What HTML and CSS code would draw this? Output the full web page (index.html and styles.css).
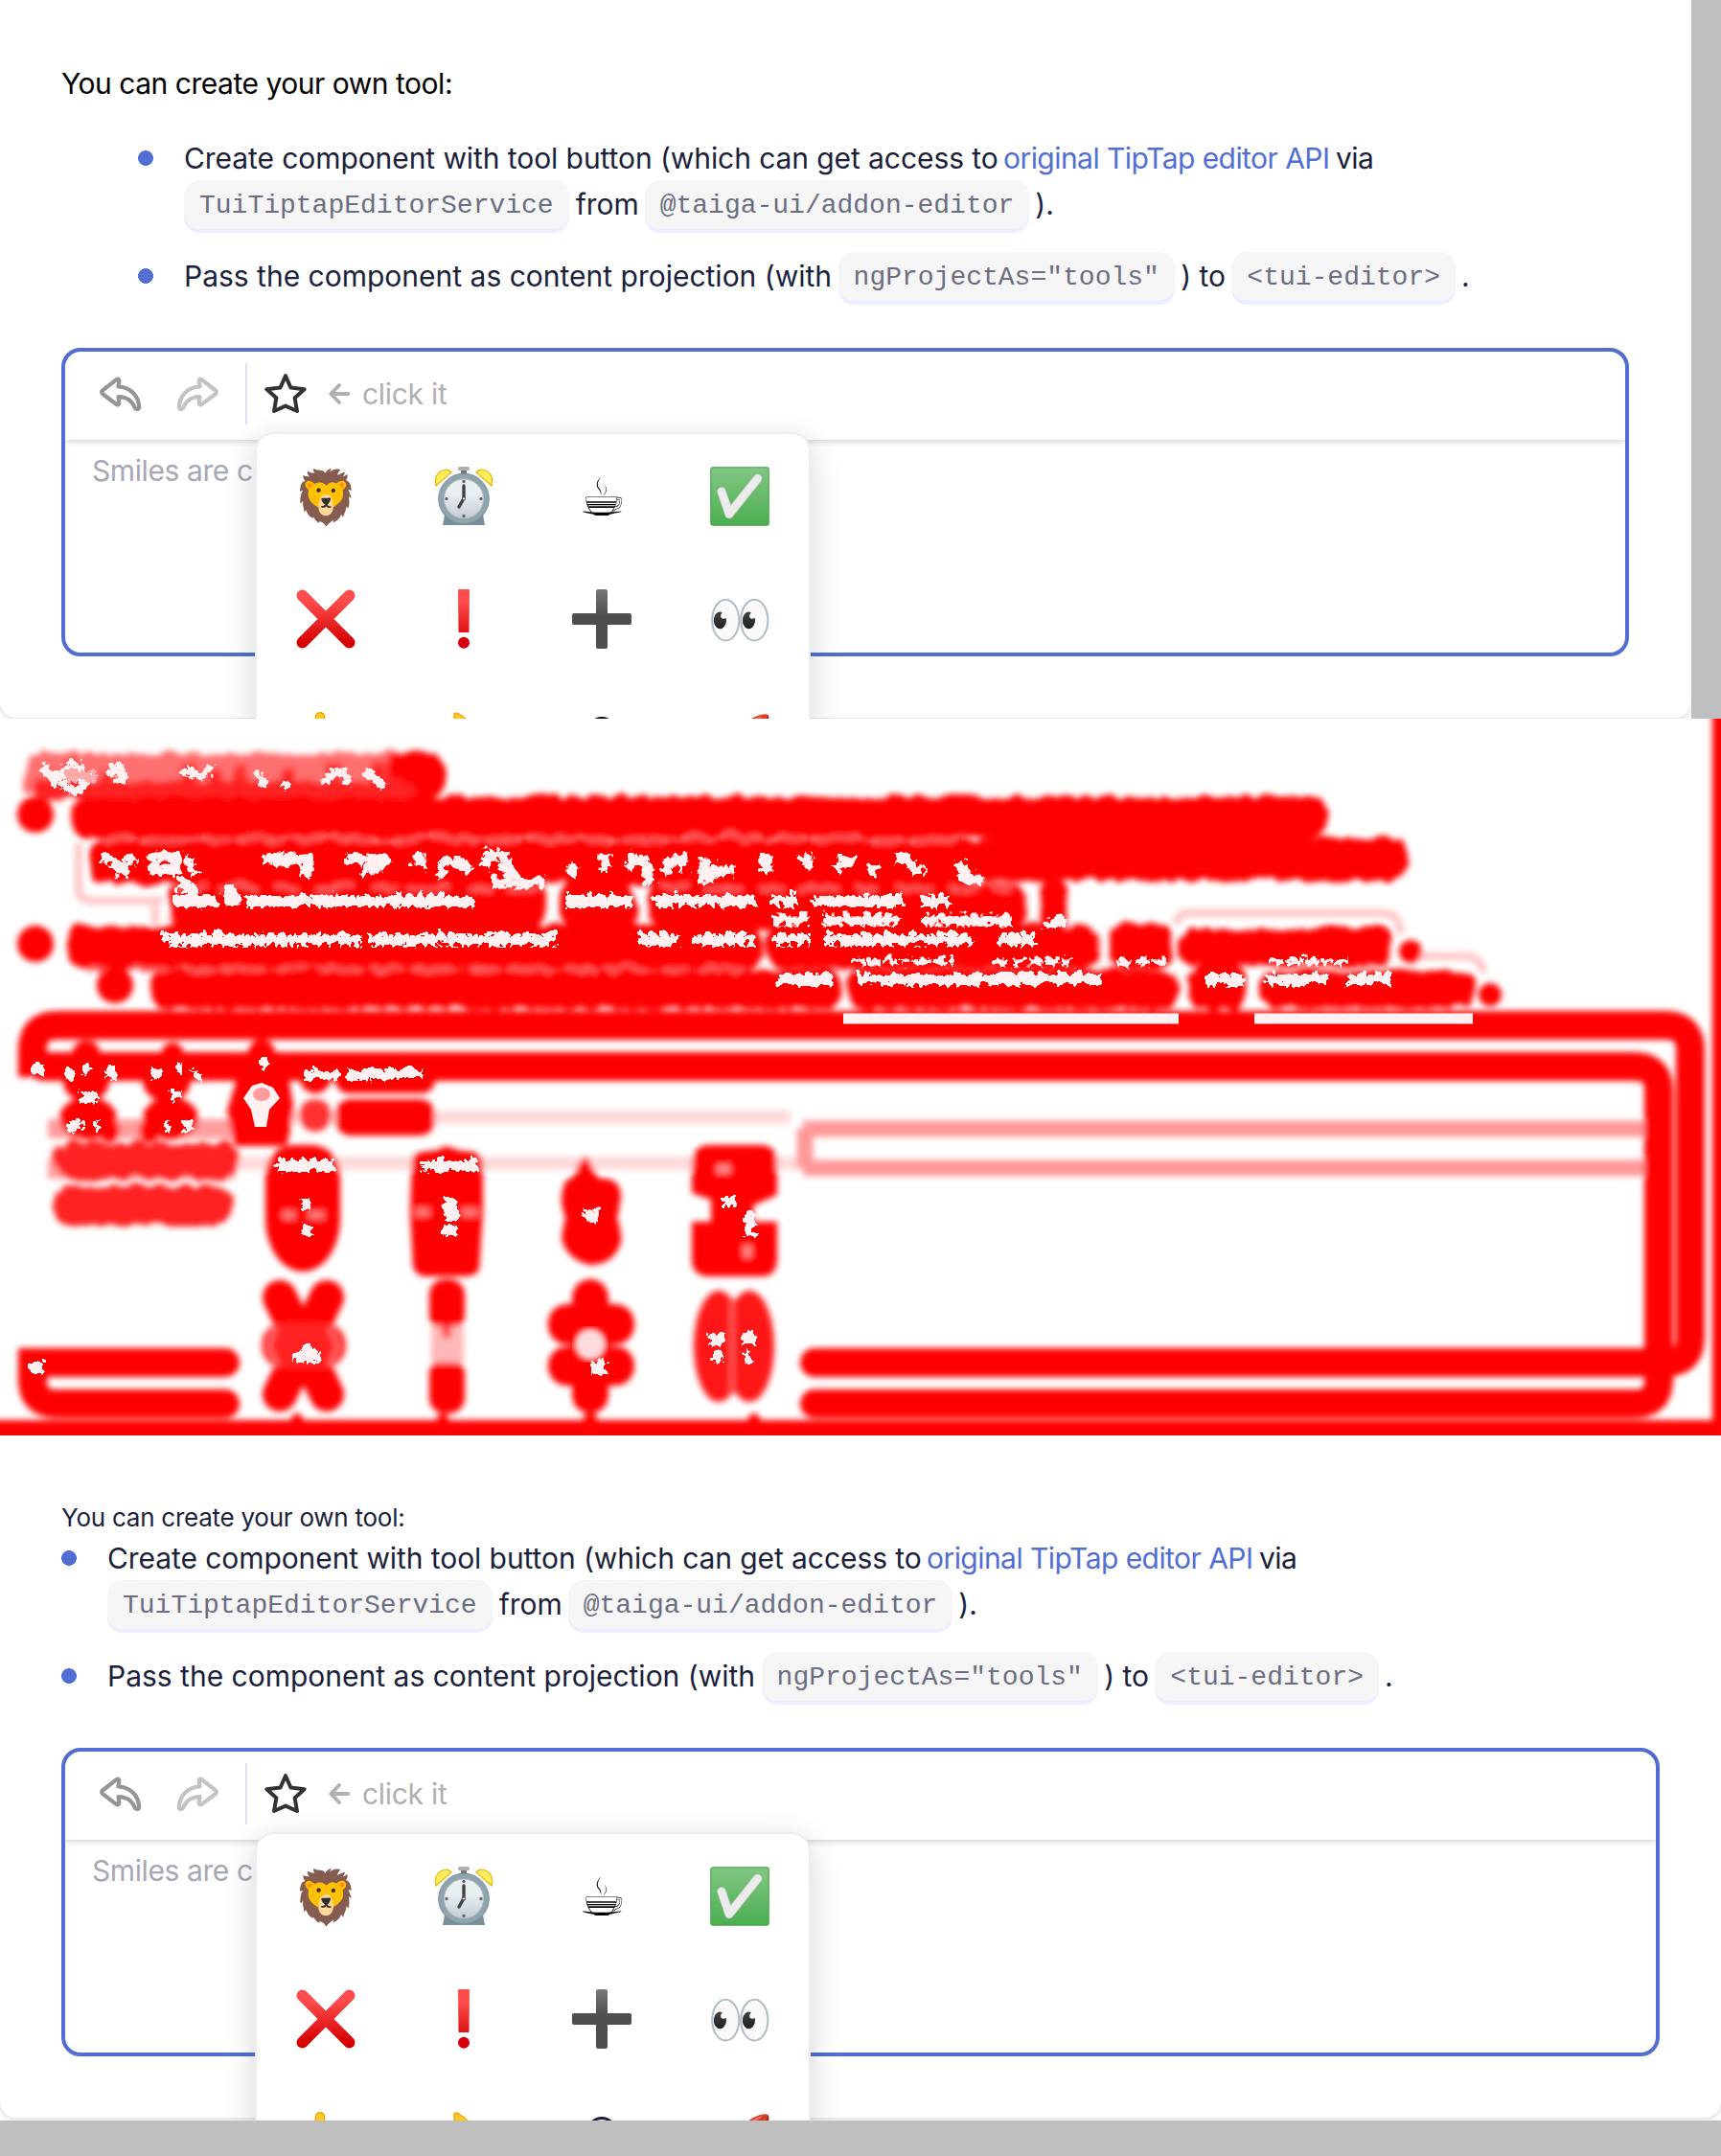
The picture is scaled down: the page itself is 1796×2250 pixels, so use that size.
FILE: index.html
```
<!DOCTYPE html>
<html lang="en">
<head>
<meta charset="utf-8">
<title>Editor custom tool: before, difference, after</title>
<link rel="stylesheet" href="styles.css">
</head>
<body>
<svg class="defs" aria-hidden="true">
  <linearGradient id="green" x1="0" y1="0" x2="0" y2="1"><stop offset="0" stop-color="#81c784"/><stop offset="1" stop-color="#4caf50"/></linearGradient>
  <linearGradient id="crimson" gradientUnits="userSpaceOnUse" x1="0" y1="0" x2="0" y2="62"><stop offset=".2" stop-color="#ff4d4d"/><stop offset=".9" stop-color="#d50000"/></linearGradient>
  <linearGradient id="coal" x1="0" y1="0" x2="0" y2="1"><stop offset="0" stop-color="#787878"/><stop offset=".45" stop-color="#4e4e4e"/></linearGradient>
  <linearGradient id="face" x1="0" y1="0" x2="0" y2="1"><stop offset=".4" stop-color="#e9eef1"/><stop offset="1" stop-color="#c3cbd1"/></linearGradient>
  <symbol id="reply" viewBox="0 0 44 36"><path d="M3 14.5 17.5 3.2Q20.5 1.5 20.3 5L19.5 10.5C32 11 41 20 41.2 32.5Q40 35.5 37 33C33 24 28 21.5 19.5 21L20.3 27.5Q20 30.5 17 28.7L3 18Q1.5 16.2 3 14.5Z" fill="none" stroke="currentColor" stroke-width="4.2" stroke-linejoin="round"/></symbol>
  <symbol id="star" viewBox="0 0 44 44"><path d="M22 3.2 27.4 15.5 41.6 17.2 31.6 26.2 34 40 22 34.6 10 40 12.4 26.2 2.4 17.2 16.6 15.5Z" fill="none" stroke="currentColor" stroke-width="4" stroke-linejoin="round"/></symbol>
  <symbol id="arrow" viewBox="0 0 22 22"><path d="M20.3 11H3M11 2 2.3 11 11 20" fill="none" stroke="currentColor" stroke-width="3.8" stroke-linecap="round" stroke-linejoin="round"/></symbol>
  <symbol id="clock" viewBox="0 0 62 62">
    <path d="M12 45h38l3 16H9z" fill="#78909c"/>
    <path d="M28 3h6v6h-6z" fill="#757575"/><rect x="25" y="0" width="12" height="4" rx="1.5" fill="#b0b0b0"/>
    <path d="M2 20Q-1 7 10 3.500Q15 2 18 6Z" fill="#ffee58" stroke="#dfbd20" stroke-width="1.3"/>
    <path d="M60 20Q63 7 52 3.500Q47 2 44 6Z" fill="#ffee58" stroke="#dfbd20" stroke-width="1.3"/>
    <circle cx="31" cy="33.5" r="26.3" fill="#90a4ae" stroke="#78909c"/>
    <circle cx="31" cy="33.5" r="20.5" fill="url(#face)" stroke="#b4c0c6"/>
    <g fill="#666"><circle cx="31" cy="15.5" r="1.7"/><circle cx="31" cy="51.5" r="1.7"/><circle cx="13" cy="33.5" r="1.7"/><circle cx="49" cy="33.5" r="1.7"/></g>
    <path d="M31 33V20M31 33 26 42" stroke="#424242" stroke-width="3.4" stroke-linecap="round"/><circle cx="31" cy="33.5" r="1.6" fill="#fff" stroke="#424242"/>
  </symbol>
  <symbol id="check" viewBox="0 0 62 62"><rect x=".7" y=".7" width="60.600" height="60.600" rx="2.500" fill="url(#green)" stroke="#43a047" stroke-opacity=".7" stroke-width="1.4"/><path d="M12 26 20 49.500 49.500 12.500" fill="none" stroke="#c9c9c9" stroke-width="9.500" stroke-linecap="round" stroke-linejoin="round"/><path d="M12 26 20 49.500 49.500 12.500" fill="none" stroke="#ececec" stroke-width="8" stroke-linecap="round" stroke-linejoin="round"/></symbol>
  <symbol id="cross" viewBox="0 0 62 62"><path d="M6.500 6.500 55.500 55.500M55.500 6.500 6.500 55.500" stroke="url(#crimson)" stroke-width="12" stroke-linecap="round"/></symbol>
  <symbol id="bang" viewBox="0 0 62 62"><path d="M26 0H36Q37 0 37 1.500L36.500 44Q36.500 45 35.500 45H26.500Q25.500 45 25.500 44L25 1.500Q25 0 26 0Z" fill="url(#crimson)"/><circle cx="31" cy="55.700" r="6" fill="#d5000c"/></symbol>
  <symbol id="plus" viewBox="0 0 62 62"><path d="M27 0H35Q37 0 37 2V25H60Q62 25 62 27V35Q62 37 60 37H37V60Q37 62 35 62H27Q25 62 25 60V37H2Q0 37 0 35V27Q0 25 2 25H25V2Q25 0 27 0Z" fill="url(#coal)"/></symbol>
  <symbol id="thumb" viewBox="0 0 62 62"><path d="M17 32 20.500 5Q21 .7 25 .7T29.500 5V27H52V58H14Z" fill="#ffca28" stroke="#f0a400" stroke-width="1.400"/></symbol>
  <symbol id="hand" viewBox="0 0 62 62"><path d="M22 30 21 2Q22 .5 25 1.500 36 8 42 18L58 40 40 60H20Z" fill="#ffca28" stroke="#f0a400" stroke-width="1.400"/></symbol>
  <symbol id="ring" viewBox="0 0 62 62"><circle cx="31" cy="21" r="14.500" fill="none" stroke="currentColor" stroke-width="3"/></symbol>
</svg>

<section class="panel before">
  <div class="card">
    <p class="title">You can create your own tool:</p>
    <ul class="steps">
      <li>
        <div class="line"><span class="lead">Create component with tool button (which can get access to</span><a class="link">original TipTap editor API</a><span class="via">via</span></div>
        <div class="line"><code>TuiTiptapEditorService</code><span class="from">from</span><code>@taiga-ui/addon-editor</code><span class="end">).</span></div>
      </li>
      <li>
        <div class="line"><span class="pass">Pass the component as content projection (with</span><code>ngProjectAs="tools"</code><span class="to">) to</span><code>&lt;tui-editor&gt;</code><span class="end">.</span></div>
      </li>
    </ul>
    <div class="editor">
      <div class="toolbar">
        <svg class="undo"><use href="#reply"/></svg><svg class="redo"><use href="#reply"/></svg><i class="divider"></i><svg class="star"><use href="#star"/></svg><svg class="arrow"><use href="#arrow"/></svg><span class="hint">click it</span>
      </div>
      <p class="placeholder">Smiles are c</p>
      <div class="menu">
        <b>🦁</b><b><svg><use href="#clock"/></svg></b><b>☕︎</b><b><svg><use href="#check"/></svg></b>
        <b><svg><use href="#cross"/></svg></b><b><svg><use href="#bang"/></svg></b><b><svg><use href="#plus"/></svg></b><b>👀</b>
        <b><svg><use href="#thumb"/></svg></b><b><svg><use href="#hand"/></svg></b><b><svg><use href="#ring"/></svg></b><b>🚀</b>
      </div>
    </div>
  </div>
</section>

<section class="panel difference">
<svg class="heat" viewBox="0 750 1796 748">
  <defs>
    <filter id="soft" x="-5%" y="-5%" width="110%" height="110%"><feGaussianBlur stdDeviation="3"/></filter>
    <filter id="bumpy" x="-5%" y="-5%" width="110%" height="110%"><feTurbulence baseFrequency=".045 .02" numOctaves="2" seed="4"/><feDisplacementMap in="SourceGraphic" scale="12" xChannelSelector="R" yChannelSelector="G"/></filter>
    <filter id="ragged" x="-5%" y="-5%" width="110%" height="110%"><feTurbulence baseFrequency=".09" numOctaves="2" seed="7"/><feDisplacementMap in="SourceGraphic" scale="13" xChannelSelector="R" yChannelSelector="G"/></filter>
  </defs>
  <g filter="url(#soft)" fill="red">
    <!-- code chips and toolbar shadows -->
    <g fill="none" stroke="#ffc4c4" stroke-width="8">
      <path d="M82 880V930Q84 940 98 940H170M162 945V965M860 970H1120Q1144 970 1146 990M1228 965Q1228 953 1240 953H1445Q1460 953 1462 975M1480 998H1530Q1545 998 1548 1015"/>
      <path d="M240 1166H825M240 1214H838" stroke="#ffdada" stroke-width="14"/>
      <path d="M838 1178H1716M838 1219H1716M840 1178V1219" stroke="#ff9898" stroke-width="17"/>
      <path d="M50 1178H245M50 1220H245" stroke="#ff9d9d" stroke-width="20"/>
    </g>
    <!-- text rows -->
    <g filter="url(#bumpy)">
    <rect x="24" y="783" width="410" height="48" rx="16" fill="#ff7070"/>
    <path d="M72 792V826M110 800V826M195 792V826M220 800V826M248 796V826M296 800V826M345 792V826M392 790V826" stroke="#ff2a2a" stroke-width="14"/>
    <rect x="400" y="783" width="61" height="48" rx="22"/>
    <rect x="30" y="812" width="400" height="19" rx="9" fill="#ff2020"/>
    <rect x="69" y="829" width="1314" height="43" rx="20"/>
    <rect x="1010" y="872" width="455" height="44" rx="20"/>
    <rect x="91" y="874" width="930" height="46" rx="18"/>
    <rect x="174" y="918" width="394" height="48" rx="18"/><rect x="580" y="918" width="81" height="48" rx="16"/><rect x="674" y="918" width="393" height="48" rx="18"/><rect x="1082" y="915" width="27" height="54" rx="13"/>
    <rect x="68" y="963" width="725" height="45" rx="18"/><rect x="796" y="963" width="348" height="45" rx="20"/><rect x="1154" y="960" width="66" height="48" rx="18"/><rect x="1228" y="966" width="223" height="39" rx="18"/>
    <rect x="152" y="1009" width="723" height="40" rx="17"/><rect x="881" y="1009" width="345" height="40" rx="18"/><rect x="1236" y="1005" width="65" height="46" rx="18"/><rect x="1312" y="1010" width="224" height="38" rx="18"/>
    <path d="M110 873H1000M185 924H560M690 924H1050M90 1009H780" stroke="#ff6a6a" stroke-width="4" stroke-dasharray="26 14 40 20"/>
    </g>
    <circle cx="37" cy="850" r="19"/><circle cx="37" cy="985" r="19"/><circle cx="1472" cy="993" r="12"/><circle cx="120" cy="1028" r="19"/><circle cx="1555" cy="1038" r="12"/>
    <!-- the two editor frames -->
    <g fill="none" stroke="red" stroke-width="30">
      <path d="M34 1124V1095Q34 1070 59 1070H1738Q1764 1070 1764 1096V1396Q1764 1422 1738 1422H848"/>
      <path d="M45 1113H1706Q1731 1113 1731 1138V1440Q1731 1465 1706 1465H850M850 1422H900M235 1422H34V1440Q34 1465 59 1465H235" stroke-linecap="round"/>
    </g>
    <!-- toolbar icons, hint and placeholder -->
    <ellipse cx="90" cy="1098" rx="14" ry="12"/><ellipse cx="90" cy="1128" rx="24" ry="22"/><ellipse cx="92" cy="1167" rx="30" ry="22"/><ellipse cx="114" cy="1180" rx="11" ry="12"/>
    <ellipse cx="180" cy="1098" rx="11" ry="10"/><ellipse cx="174" cy="1128" rx="25" ry="22"/><ellipse cx="178" cy="1167" rx="29" ry="22"/><ellipse cx="156" cy="1180" rx="11" ry="12"/>
    <ellipse cx="273" cy="1099" rx="14" ry="14"/><path d="M250 1130 273 1116 298 1130 303 1160 296 1192 248 1192 241 1160Z" stroke="red" stroke-width="8" stroke-linejoin="round"/>
    <circle cx="329" cy="1125" r="16"/><circle cx="329" cy="1164" r="17" fill="#ff3030"/><rect x="350" y="1105" width="104" height="36" rx="14"/><rect x="350" y="1147" width="104" height="38" rx="16"/>
    <g filter="url(#bumpy)"><rect x="54" y="1190" width="192" height="38" rx="16" fill="#ff2020"/><rect x="54" y="1235" width="186" height="40" rx="16" fill="#ff2020"/></g>
    <!-- emoji -->
    <rect x="277" y="1195" width="78" height="98" rx="30"/><ellipse cx="316" cy="1272" rx="39" ry="55"/>
    <path d="M430 1207Q440 1200 454 1201L466 1196 480 1201Q502 1201 504 1212V1265L500 1325Q496 1332 486 1332H446Q434 1332 431 1322L428 1265Z"/>
    <path d="M612 1206 625 1230Q648 1228 648 1250L644 1272Q649 1285 648 1297 640 1320 615 1320 591 1314 586 1292L590 1270Q582 1252 590 1233 602 1228 603 1215Z"/>
    <path d="M738 1195H796Q811 1197 811 1214V1247L786 1258V1275H811V1315Q810 1332 795 1332H738Q722 1330 722 1315V1275H742V1252L722 1245V1214Q723 1197 738 1195Z"/>
    <path d="M295 1268H308M322 1268H338M434 1265H448M482 1265H498" stroke="#ff7878" stroke-width="9"/>
    <path d="M748 1220H762M780 1300V1312" stroke="#ff8a8a" stroke-width="9"/>
    <g stroke="red" stroke-width="36" stroke-linecap="round"><path d="M292 1354 341 1455M341 1354 292 1455"/></g><rect x="273" y="1380" width="88" height="48" rx="24" fill="#ff2020"/><path d="M288 1385 280 1405 290 1425M344 1385 353 1405 344 1425" fill="none" stroke="#ff6868" stroke-width="5"/>
    <rect x="448" y="1335" width="37" height="53" rx="16"/><rect x="448" y="1418" width="37" height="57" rx="16"/><rect x="450" y="1384" width="34" height="38" fill="#ffb8b8"/><path d="M466 1384V1396" stroke="#ff5050" stroke-width="10"/>
    <rect x="597" y="1335" width="38" height="140" rx="19"/><rect x="572" y="1361" width="90" height="42" rx="20"/><rect x="572" y="1405" width="90" height="41" rx="20"/>
    <ellipse cx="750" cy="1405" rx="26" ry="58" fill="#ff1414"/><ellipse cx="782" cy="1405" rx="26" ry="58" fill="#ff1414"/><path d="M764 1355V1455" stroke="#ff5a5a" stroke-width="5"/>
    <!-- page edges -->
    <rect x="-20" y="1482" width="1840" height="40"/><rect x="1787" y="730" width="30" height="770"/>
    <circle cx="310" cy="1481" r="6"/><circle cx="462" cy="1481" r="6"/><circle cx="616" cy="1481" r="7"/><circle cx="787" cy="1481" r="6"/>
  </g>
  <!-- unchanged spots inside the changed areas -->
  <g fill="none" stroke="#fff1f1" stroke-width="12" stroke-linejoin="round" filter="url(#ragged)">
    <path d="M40 797l8 8 7 12 12-20 12-1 9 12-9 14-14-5 4 6M48 808h50M111 806l7-10 7 10-5 9M188 809l7-10 7 10 12-5 3-9M264 804l10 12M294 810v10M336 813l8-12 12 2 3 13M376 803l12 5 10 9" stroke-width="8"/>
    <path d="M66 807h30" stroke="#ffaaaa" stroke-width="12"/>
    <path d="M102 890l12 2 10 16 12-18M158 890h22v16h-22zM192 893l10 14M270 892h46l2 20M278 895h36M358 894h40l-24 17M434 886v18M455 914l6-18 18 1 7 10M500 902l7-14h15l4 18 9 12M513 918h52M590 900l8 8M628 887v18M652 905l5-14 12 8 8 20M690 908l6-12 12-2 2 12M731 890v24l16-10 14 2M796 888v20M836 890l6 12M868 906l8-10 14 2M930 892l12-1 8 12 12 3M997 895l10 20 14-1M908 898v14" stroke-width="11"/>
    <path d="M183 921h15l-3 15M235 920v14l12 3M180 937h44M252 937h238M587 937h68M680 937h106M802 937h26M845 937h95M958 937h32"/>
    <path d="M803 957h38M855 957h80M960 957h92" stroke-width="11"/>
    <path d="M164 977h209M380 977h198M664 977h40M720 977h64M803 977h38M856 977h155M1038 977h40M1088 965l20-8"/>
    <path d="M808 1019h56M890 1019h255M1255 1019h40M1318 1019h63M1403 1019h45" stroke-width="12"/>
    <path d="M885 1000h105M1036 1000h80M1163 1002h12M1182 1000h30M1324 1000h80" stroke-width="7" stroke-dasharray="14 3"/>
    <path d="M313 1118h38M358 1118h78" stroke-width="10"/>
    <path d="M286 1213h60M437 1213h58M310 1252h12M312 1281h10M466 1245v20M460 1264h15M466 1274v12M605 1263l17 4M757 1245v10M780 1262v25M303 1412h30M316 1400v12M612 1424h18M738 1394h14M770 1394h14M741 1413h8M772 1413h9"/>
    <path d="M30 1112h12M28 1423h16M64 1118h10M83 1112h8M106 1116h12M154 1116h12M180 1110h6M200 1118h5M82 1141h16M176 1140h8M69 1172h14M95 1172h6M168 1172h6M189 1172h8M270 1108h6"/>
  </g>
  <path d="M880 1063H1230M1309 1063H1537" fill="none" stroke="#fff1f1" stroke-width="11"/>
  <g filter="url(#soft)"><circle cx="616" cy="1403" r="17" fill="#ffdcdc"/></g>
  <path d="M254 1146 263 1133 273 1130 285 1135 292 1146 281 1158 278 1176H266L262 1158Z" fill="#fff1f1"/><ellipse cx="273" cy="1142" rx="9" ry="7" fill="#ff9c9c"/>
</svg>
</section>

<section class="panel after">
  <div class="card">
    <p class="title">You can create your own tool:</p>
    <ul class="steps">
      <li>
        <div class="line"><span class="lead">Create component with tool button (which can get access to</span><a class="link">original TipTap editor API</a><span class="via">via</span></div>
        <div class="line"><code>TuiTiptapEditorService</code><span class="from">from</span><code>@taiga-ui/addon-editor</code><span class="end">).</span></div>
      </li>
      <li>
        <div class="line"><span class="pass">Pass the component as content projection (with</span><code>ngProjectAs="tools"</code><span class="to">) to</span><code>&lt;tui-editor&gt;</code><span class="end">.</span></div>
      </li>
    </ul>
    <div class="editor">
      <div class="toolbar">
        <svg class="undo"><use href="#reply"/></svg><svg class="redo"><use href="#reply"/></svg><i class="divider"></i><svg class="star"><use href="#star"/></svg><svg class="arrow"><use href="#arrow"/></svg><span class="hint">click it</span>
      </div>
      <p class="placeholder">Smiles are c</p>
      <div class="menu">
        <b>🦁</b><b><svg><use href="#clock"/></svg></b><b>☕︎</b><b><svg><use href="#check"/></svg></b>
        <b><svg><use href="#cross"/></svg></b><b><svg><use href="#bang"/></svg></b><b><svg><use href="#plus"/></svg></b><b>👀</b>
        <b><svg><use href="#thumb"/></svg></b><b><svg><use href="#hand"/></svg></b><b class="ink"><svg><use href="#ring"/></svg></b><b>🚀</b>
      </div>
    </div>
  </div>
</section>
</body>
</html>
```
FILE: styles.css
```
* { box-sizing: border-box; }
body { margin: 0; width: 1796px; height: 2250px; overflow: hidden; background: #bfbfbf; color: #1b1f3b; font: 400 30px/48px Inter, "Liberation Sans", sans-serif; }
p, ul { margin: 0; padding: 0; list-style: none; }
svg { display: block; flex: none; }
.defs { position: absolute; width: 0; height: 0; }

.panel { background: #fff; overflow: hidden; }
.before { width: 1765px; height: 750px; }
.difference { height: 748px; }
.after { height: 715px; }
.card { border-radius: 0 0 17px 17px; padding: 63px 65px 0 64px; height: 749px; box-shadow: 0 2px 5px 1px #e4e4e4; }
.after .card { height: 712px; padding-top: 68px; padding-right: 64px; }

.title { color: #000; letter-spacing: -.48px; }
.after .title { color: #1b1f3b; font-size: 26px; line-height: 36px; letter-spacing: -.25px; }
.steps { display: grid; gap: 27px; padding-left: 80px; margin: 30px 0 51px; }
.after .steps { padding-left: 0; margin-top: 0; }
.steps li { padding-left: 48px; background: radial-gradient(circle, #526ed3 7.6px, transparent 8.2px) 0 16px / 16px 16px no-repeat; }
.line { display: flex; height: 48px; white-space: nowrap; }
.line > * { flex: none; }
.lead { width: 855px; letter-spacing: -.08px; }
.link { width: 347px; color: #526ed3; letter-spacing: -.55px; }
.via { letter-spacing: -.6px; }
.from { width: 79px; padding-left: 7px; }
.pass { width: 682.6px; }
.to { width: 59.5px; text-align: center; }
.end { padding-left: 6px; }
code { height: 51px; margin-top: -1px; padding: 2px 16px 0; border-radius: 16px; background: #f6f6f6; box-shadow: 0 4px #ebefff; color: #6b6d80; font: 28px/49px "Liberation Mono", monospace; }

.editor { position: relative; height: 322px; border: 4px solid #526ed3; border-radius: 20px; }
.toolbar { display: flex; align-items: center; height: 92px; padding-left: 36px; border-radius: 16px 16px 0 0; box-shadow: 0 2px 6px rgba(0, 0, 0, .18); clip-path: inset(0 0 -12px); }
.undo, .redo { width: 44px; height: 36px; margin-top: -4px; color: #959595; }
.redo { margin: -4px 28px 0 36px; color: #c3c3c3; transform: scaleX(-1); }
.divider { width: 2px; height: 64px; margin-top: -4px; background: #dadff5; }
.star { width: 44px; height: 44px; margin: -5px 23px 0 18px; color: #333; }
.arrow { width: 22px; height: 22px; margin-top: -4px; color: #b0b0b0; }
.hint { margin: -4px 0 0 13px; color: #b0b0b0; letter-spacing: -.3px; }
.placeholder { padding: 8px 0 0 28px; color: #a6a7b5; letter-spacing: -.4px; }

.menu { position: absolute; left: 198px; top: 84px; width: 580px; height: 420px; border: 2px solid #ededed; border-radius: 20px; background: #fff; box-shadow: 0 8px 32px rgba(0, 0, 0, .16); display: grid; grid-template-columns: repeat(4, 144px); grid-auto-rows: 128px; padding-top: 1px; }
.menu b { display: flex; align-items: center; justify-content: center; font-size: 55px; font-weight: 400; line-height: 128px; color: #000; }
.menu .ink { color: #1b1f3b; }
.menu svg { width: 62px; height: 62px; }
```
